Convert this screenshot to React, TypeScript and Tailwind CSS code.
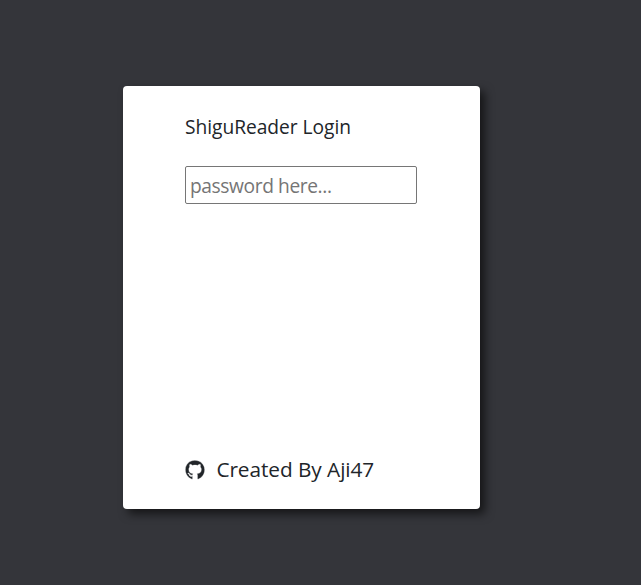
import { FaGithub } from "react-icons/fa";

export default function App() {
  return (
    <div className="h-[585px] w-full overflow-hidden bg-[#34353a] pt-[86px] pl-[123px] font-['Open_Sans','Noto_Sans',sans-serif]">
      <main className="flex h-[423px] w-[357px] flex-col rounded bg-white px-[62px] shadow-[5px_5px_10px_rgba(0,0,0,0.6)]">
        <h1 className="mt-[27px] h-7 w-fit whitespace-nowrap text-[19.2px] leading-7 tracking-[-0.03px] text-[#212529]">ShiguReader Login</h1>
        <input
          type="password"
          placeholder="password here..."
          className="mt-[25px] h-[38px] w-[232px] rounded-[2px] border border-[#767676] px-1 text-[19.2px] tracking-[-0.4px] placeholder:text-[#757575]"
        />
        <a className="mt-auto mb-[24px] flex h-[30px] items-center gap-[11.4px] whitespace-nowrap text-[20.8px] tracking-[-0.06px] text-[#212529]">
          <FaGithub size={20} className="stroke-white [stroke-width:10px]" />
          <span>Created By Aji47</span>
        </a>
      </main>
    </div>
  );
}
